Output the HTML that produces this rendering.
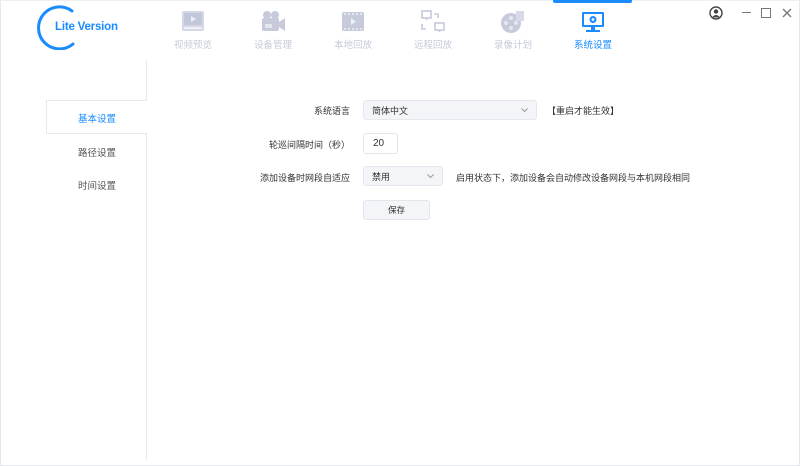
<!DOCTYPE html>
<html><head><meta charset="utf-8"><style>
*{margin:0;padding:0;box-sizing:border-box}
body{width:800px;height:466px;background:#fff;font-family:"Liberation Sans","Noto Sans CJK SC",sans-serif;position:relative;overflow:hidden;font-size:9px;color:#333}
.frame{position:absolute;left:0;top:0;width:800px;height:466px;border:1px solid #e6e8ee;border-top:1px solid #eef0f4}
.abs{position:absolute}
.tab{position:absolute;top:10px;width:60px;text-align:center;color:#c6cad8;font-size:9.5px}
.tab svg{display:block;margin:0 auto 3px}
.tab .lbl{margin-top:1px}
.lbl2{position:absolute;right:0;font-size:9px;color:#333;text-align:right}
.sel{position:absolute;background:#f4f5f8;border:1px solid #e6e8ee;border-radius:3px;font-size:9px;padding-left:8px;line-height:20px}
.chev{position:absolute;right:8px;top:7px}
</style></head><body>
<div class="frame"></div>
<!-- logo -->
<svg class="abs" style="left:36px;top:4px" width="50" height="46" viewBox="0 0 50 46"><path d="M36 7 A21 21 0 1 0 37 40" fill="none" stroke="#1a8cff" stroke-width="3" stroke-linecap="round"/></svg>
<div class="abs" style="left:55px;top:21px;color:#1a8cff;font-size:11.5px;font-weight:bold;letter-spacing:-0.2px">Lite Version</div>
<div class="abs" style="left:553px;top:0;width:79px;height:3px;background:#1a8cff;border-radius:0 0 2px 2px"></div>
<!-- tabs -->
<div class="tab" style="left:163px"><svg width="26" height="24" viewBox="0 0 26 24"><rect x="2" y="1" width="22" height="20" rx="2" fill="#d4d8e6"/><rect x="4" y="3" width="18" height="12" fill="#c2c7da"/><path d="M11 6 L16 9 L11 12Z" fill="#eef0f6"/><rect x="4" y="17" width="18" height="2" fill="#eef0f6"/></svg><div class="lbl">视频预览</div></div>
<div class="tab" style="left:243px"><svg width="26" height="24" viewBox="0 0 26 24"><circle cx="7" cy="5" r="4" fill="#c6cadb"/><circle cx="15" cy="5" r="4" fill="#c6cadb"/><rect x="2" y="8" width="17" height="13" rx="2" fill="#c6cadb"/><path d="M19 12 L25 8 V21 L19 17Z" fill="#c6cadb"/><rect x="5" y="14" width="7" height="4" fill="#e6e8f0"/></svg><div class="lbl">设备管理</div></div>
<div class="tab" style="left:323px"><svg width="26" height="24" viewBox="0 0 26 24"><rect x="2" y="2" width="22" height="19" rx="2" fill="#c6cadb"/><path d="M11 8 L16 11.5 L11 15Z" fill="#eef0f6"/><g fill="#e6e8f0"><rect x="4" y="3" width="2" height="2"/><rect x="8" y="3" width="2" height="2"/><rect x="12" y="3" width="2" height="2"/><rect x="16" y="3" width="2" height="2"/><rect x="20" y="3" width="2" height="2"/><rect x="4" y="18" width="2" height="2"/><rect x="8" y="18" width="2" height="2"/><rect x="12" y="18" width="2" height="2"/><rect x="16" y="18" width="2" height="2"/><rect x="20" y="18" width="2" height="2"/></g></svg><div class="lbl">本地回放</div></div>
<div class="tab" style="left:403px"><svg width="26" height="24" viewBox="0 0 26 24" fill="none" stroke="#c6cadb" stroke-width="1.6"><rect x="2" y="1" width="9" height="7"/><path d="M6.5 8v2"/><rect x="15" y="13" width="9" height="7"/><path d="M19.5 20v2"/><path d="M14 4h4v4M2 14v5h4"/></svg><div class="lbl">远程回放</div></div>
<div class="tab" style="left:483px"><svg width="26" height="24" viewBox="0 0 26 24"><circle cx="11" cy="13" r="10" fill="#c6cadb"/><g fill="#e6e8f0"><circle cx="11" cy="8" r="2"/><circle cx="11" cy="18" r="2"/><circle cx="6" cy="13" r="2"/><circle cx="16" cy="13" r="2"/></g><rect x="16" y="1" width="8" height="10" fill="#d8dbe7"/></svg><div class="lbl">录像计划</div></div>
<div class="tab" style="left:563px;color:#1a8cff"><svg width="26" height="24" viewBox="0 0 26 24"><rect x="2" y="2" width="22" height="15" rx="1" fill="#1a8cff"/><rect x="4" y="4" width="18" height="11" fill="#fff"/><circle cx="13" cy="9.5" r="3.5" fill="#1a8cff"/><circle cx="13" cy="9.5" r="1.4" fill="#fff"/><rect x="11" y="17" width="4" height="3" fill="#1a8cff"/><rect x="6" y="20" width="14" height="2" fill="#1a8cff"/></svg><div class="lbl">系统设置</div></div>
<!-- window controls -->
<svg class="abs" style="left:709px;top:6px" width="14" height="14" viewBox="0 0 14 14"><circle cx="7" cy="7" r="6" fill="none" stroke="#444" stroke-width="1.4"/><circle cx="7" cy="5.5" r="2.2" fill="#444"/><path d="M3 11.5 Q7 6.5 11 11.5" fill="#444"/></svg>
<div class="abs" style="left:742px;top:12px;width:9px;height:1.4px;background:#777"></div>
<div class="abs" style="left:761px;top:8px;width:10px;height:10px;border:1.4px solid #777"></div>
<svg class="abs" style="left:782px;top:8px" width="10" height="10"><path d="M1 1L9 9M9 1L1 9" stroke="#777" stroke-width="1.3"/></svg>
<!-- sidebar -->
<div class="abs" style="left:146px;top:60px;width:1px;height:40px;background:#e8e9ee"></div>
<div class="abs" style="left:146px;top:133px;width:1px;height:327px;background:#e8e9ee"></div>
<div class="abs" style="left:46px;top:100px;width:101px;height:1px;background:#e8e9ee"></div>
<div class="abs" style="left:46px;top:133px;width:101px;height:1px;background:#e8e9ee"></div>
<div class="abs" style="left:46px;top:100px;width:1px;height:34px;background:#e8e9ee"></div>
<div class="abs" style="left:78px;top:111px;color:#1a8cff;font-size:9.5px">基本设置</div>
<div class="abs" style="left:78px;top:145px;color:#555;font-size:9.5px">路径设置</div>
<div class="abs" style="left:78px;top:178px;color:#555;font-size:9.5px">时间设置</div>
<!-- form -->
<div class="abs" style="left:230px;top:104px;width:120px"><div class="lbl2">系统语言</div></div>
<div class="sel" style="left:363px;top:100px;width:174px;height:20px">简体中文<svg class="chev" width="7" height="5"><path d="M0.5 0.5L3.5 3.5L6.5 0.5" fill="none" stroke="#999"/></svg></div>
<div class="abs" style="left:547px;top:104px;font-size:9px">【重启才能生效】</div>
<div class="abs" style="left:230px;top:138px;width:120px"><div class="lbl2">轮巡间隔时间（秒）</div></div>
<div class="abs" style="left:363px;top:133px;width:35px;height:21px;border:1px solid #e3e5eb;border-radius:3px;font-size:10px;line-height:19px;padding-left:9px">20</div>
<div class="abs" style="left:230px;top:171px;width:120px"><div class="lbl2">添加设备时网段自适应</div></div>
<div class="sel" style="left:363px;top:166px;width:80px;height:20px">禁用<svg class="chev" width="7" height="5"><path d="M0.5 0.5L3.5 3.5L6.5 0.5" fill="none" stroke="#999"/></svg></div>
<div class="abs" style="left:456px;top:171px;font-size:9px">启用状态下，添加设备会自动修改设备网段与本机网段相同</div>
<div class="abs" style="left:363px;top:200px;width:67px;height:20px;background:#f4f5f8;border:1px solid #e3e5eb;border-radius:3px;text-align:center;line-height:18px;font-size:8.5px">保存</div>
</body></html>
